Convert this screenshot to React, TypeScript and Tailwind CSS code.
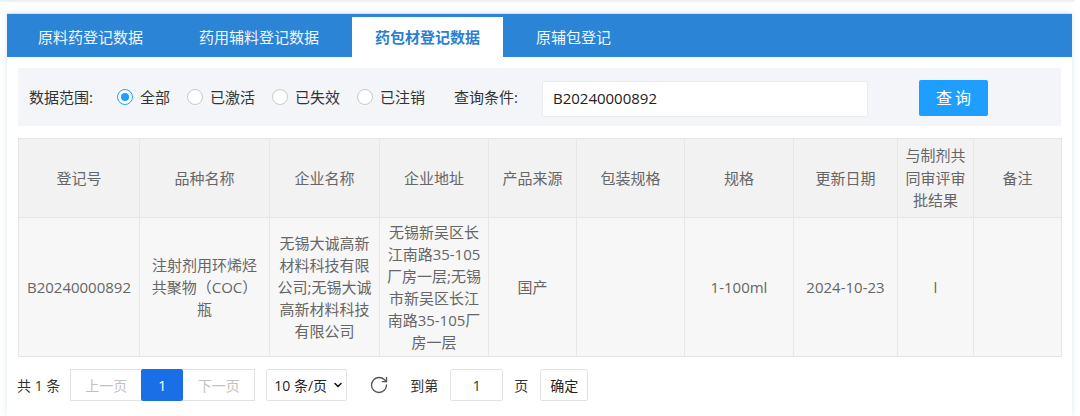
import React from 'react';
import { ChevronDown, RotateCw } from 'lucide-react';

const tabs = ['原料药登记数据', '药用辅料登记数据', '药包材登记数据', '原辅包登记'];
const activeTab = 2;

const radios = [
  { label: '全部', checked: true },
  { label: '已激活', checked: false },
  { label: '已失效', checked: false },
  { label: '已注销', checked: false },
];

const columns: { title: string[]; width: number }[] = [
  { title: ['登记号'], width: 121 },
  { title: ['品种名称'], width: 130 },
  { title: ['企业名称'], width: 110 },
  { title: ['企业地址'], width: 109 },
  { title: ['产品来源'], width: 88 },
  { title: ['包装规格'], width: 108 },
  { title: ['规格'], width: 109 },
  { title: ['更新日期'], width: 104 },
  { title: ['与制剂共', '同审评审', '批结果'], width: 76 },
  { title: ['备注'], width: 88 },
];

// one record, lines broken the way the cells wrap
const row: string[][] = [
  ['B20240000892'],
  ['注射剂用环烯烃', '共聚物（COC）', '瓶'],
  ['无锡大诚高新', '材料科技有限', '公司;无锡大诚', '高新材料科技', '有限公司'],
  ['无锡新吴区长', '江南路35-105', '厂房一层;无锡', '市新吴区长江', '南路35-105厂', '房一层'],
  ['国产'],
  [],
  ['1-100ml'],
  ['2024-10-23'],
  ['l'],
  [],
];

const Radio: React.FC<{ checked: boolean }> = ({ checked }) => (
  <span
    className={`w-[16px] h-[16px] rounded-full border flex items-center justify-center bg-white ${
      checked ? 'border-[#1e9fff]' : 'border-[#c9c9c9]'
    }`}
  >
    {checked && <span className="w-[8px] h-[8px] rounded-full bg-[#1e9fff]" />}
  </span>
);

export default function App() {
  return (
    <div className="w-[1080px] h-[416px] overflow-hidden bg-white text-[#333] font-['Open_Sans','Noto_Sans_CJK_SC',sans-serif]">
      <div className="h-[2px] w-[1075px] bg-[#f1f1f1]" />

      <div className="mt-[11px] ml-[7px] w-[1065px] h-[403px] bg-white border-t border-[#d3e2f3] shadow-[0_0_6px_rgba(40,110,190,0.16)]">
        {/* tabs */}
        <div className="h-[43px] bg-[#2b84d6] flex items-end gap-[10px] pl-[8px]">
          {tabs.map((t, i) => (
            <div
              key={t}
              className={`h-[40px] px-[23px] flex items-center text-[15px] ${
                i === activeTab ? 'bg-white text-[#2b7fd3] font-bold' : 'text-[#f2f7fd]'
              }`}
            >
              {t}
            </div>
          ))}
        </div>

        <div className="px-[11px] pt-[11px]">
          {/* filter */}
          <div className="h-[58px] bg-[#f4f5f9] flex items-center pl-[11px] text-[15px]">
            <span>数据范围:</span>
            {radios.map((r, i) => (
              <div key={r.label} className={`flex items-center ${i === 0 ? 'ml-[24px]' : 'ml-[17px]'}`}>
                <Radio checked={r.checked} />
                <span className="ml-[7px]">{r.label}</span>
              </div>
            ))}
            <span className="ml-[29px]">查询条件:</span>
            <div className="ml-[24px] w-[326px] h-[36px] bg-white border border-[#ececec] rounded-[2px] flex items-center pl-[10px] text-[#222] mt-[3px]">
              B20240000892
            </div>
            <button className="ml-[51px] w-[69px] h-[36px] bg-[#1e9fff] text-white rounded-[2px] text-[16px] tracking-[3px] pl-[3px] mt-[1px]">
              查询
            </button>
          </div>

          {/* table */}
          <table className="mt-[12px] w-[1043px] table-fixed border-collapse text-[15px] text-[#666]">
            <colgroup>
              {columns.map((c, i) => (
                <col key={i} style={{ width: c.width }} />
              ))}
            </colgroup>
            <thead>
              <tr className="bg-[#f2f2f2]">
                {columns.map((c, i) => (
                  <th key={i} className="h-[79px] border border-[#e6e6e6] font-normal leading-[22.5px] text-center align-middle">
                    {c.title.map((l) => (
                      <div key={l}>{l}</div>
                    ))}
                  </th>
                ))}
              </tr>
            </thead>
            <tbody>
              <tr className="bg-[#f7f7f7]">
                {row.map((lines, i) => (
                  <td key={i} className="h-[139px] border border-[#e6e6e6] leading-[22px] text-center align-middle whitespace-nowrap">
                    {lines.map((l) => (
                      <div key={l}>{l}</div>
                    ))}
                  </td>
                ))}
              </tr>
            </tbody>
          </table>

          {/* pagination */}
          <div className="mt-[12px] h-[32px] flex items-center text-[14px] whitespace-nowrap">
            <span className="ml-[-1px]">共 1 条</span>
            <div className="ml-[10px] flex h-[32px]">
              <span className="w-[71px] flex items-center justify-center border border-r-0 border-[#e2e2e2] text-[#c2c2c2]">
                上一页
              </span>
              <span className="w-[42px] flex items-center justify-center bg-[#1a6fe6] text-white rounded-[2px]">1</span>
              <span className="w-[72px] flex items-center justify-center border border-l-0 border-[#e2e2e2] text-[#c2c2c2]">
                下一页
              </span>
            </div>
            <div className="ml-[11px] w-[81px] h-[32px] shrink-0 border border-[#e2e2e2] rounded-[2px] flex items-center pl-[7px] text-[#222]">
              <span>10 条/页</span>
              <ChevronDown size={12} strokeWidth={3} className="ml-[5px] shrink-0 text-[#111]" />
            </div>
            <RotateCw size={20} strokeWidth={1.6} className="ml-[22px] text-[#555]" />
            <span className="ml-[21px]">到第</span>
            <div className="ml-[12px] w-[53px] h-[32px] border border-[#e2e2e2] rounded-[2px] flex items-center justify-center">
              1
            </div>
            <span className="ml-[11px]">页</span>
            <button className="ml-[12px] w-[48px] h-[32px] border border-[#e2e2e2] rounded-[2px] bg-white text-[#222]">
              确定
            </button>
          </div>
        </div>
      </div>
    </div>
  );
}
